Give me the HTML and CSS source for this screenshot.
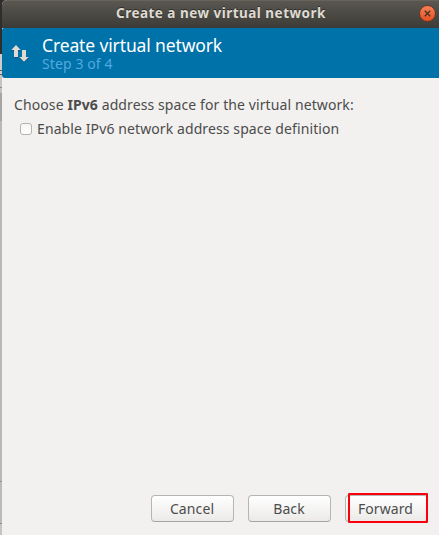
FILE: index.html
```html
<!DOCTYPE html>
<html lang="en">
<head>
<meta charset="utf-8">
<title>Create a new virtual network</title>
<link rel="stylesheet" href="styles.css">
</head>
<body>
<div class="desktop">
  <main class="window">
    <header class="titlebar">
      <h1 class="title">Create a new virtual network</h1>
      <button class="close" aria-label="Close"><svg width="17" height="17" viewBox="0 0 17 17"><path d="M5.8 5.8 11.2 11.2M11.2 5.8 5.8 11.2" stroke="#43331f" stroke-width="1.3"/></svg></button>
    </header>
    <section class="banner">
      <svg class="arrows" width="20" height="18" viewBox="0 0 20 18"><path fill="#174563" opacity=".55" d="M5 1 10 6H7V13H3V6H0ZM11 6H15V13H18L13 18 8 13H11Z"/><path fill="#dfdbd2" d="M5 0 9.7 5H7V12H3V5H0.3ZM11 5H15V12H17.7L13 16.7 8.3 12H11Z"/></svg>
      <div class="heading">
        <h2>Create virtual network</h2>
        <p>Step 3 of 4</p>
      </div>
    </section>
    <section class="content">
      <p class="prompt">Choose <b>IPv6</b> address space for the virtual network:</p>
      <label class="option"><span class="check"></span><span class="option-text">Enable IPv6 network address space definition</span></label>
    </section>
    <footer class="actions">
      <button class="btn">Cancel</button>
      <button class="btn">Back</button>
      <button class="btn marked">Forward</button>
    </footer>
  </main>
</div>
</body>
</html>
```
FILE: styles.css
```css
*, *::after { box-sizing: border-box; }
body { margin: 0; font-family: "Noto Sans", "Open Sans", sans-serif; color: #4c4c4c; }
h1, h2, p { margin: 0; font-weight: 400; white-space: nowrap; }
.desktop {
  width: 439px; height: 535px; padding-left: 2px; overflow: hidden;
  background: linear-gradient(#302e2b 0 54px, #cdccca 54px 70px, #62615f 70px 71px, #cdccca 71px 74px, #62615f 74px 75px, #c5c4c2 75px 87px, #8e8d8b 87px 88px, #c2c1bf 88px 93px, #a6a5a3 93px 121px, #b9b8b6 121px 481px, #92918f 481px 482px, #bbbab8 482px 523px, #8e8d8b 523px 524px, #c5c4c2 524px);
}
.window { display: flex; flex-direction: column; height: 535px; background: #f2f1ef; border-radius: 5px 0 0 0; overflow: hidden; }
.titlebar { display: flex; align-items: center; height: 28px; padding: 0 3px 3px 114px; justify-content: space-between; background: linear-gradient(#595750, #3c3b37); border-top: 1px solid #66635b; }
.title { font-size: 13.5px; line-height: 18px; font-weight: 700; letter-spacing: .48px; color: #dfdbd2; text-shadow: 0 -1px #2c2b28; }
.close { width: 17px; height: 17px; padding: 0; border: 1px solid #6b3521; border-radius: 50%; background: linear-gradient(#f58158, #e64f22); }
.close svg { display: block; margin: -1px; }
.banner { display: flex; height: 50px; padding: 8px 0 0 9px; background: #0072aa; border-radius: 2px 0 0 3px; }
.arrows { margin: 9px 11px 0 0; }
.heading h2 { font-size: 17.5px; line-height: 18px; letter-spacing: -.13px; color: #fff; }
.heading p { font-size: 14px; line-height: 17px; margin-top: 1px; letter-spacing: .1px; color: #53a9de; }
.content { flex: 1; padding: 17px 12px; font-size: 14px; line-height: 20px; }
.prompt { letter-spacing: .1px; }
.prompt b { font-weight: 700; }
.option { display: flex; align-items: center; height: 20px; margin-top: 4px; padding-left: 6px; white-space: nowrap; letter-spacing: .1px; }
.check { width: 12px; height: 12px; margin-right: 5px; border: 1px solid #b4b3b0; border-radius: 3px; background: linear-gradient(#f5f5f4, #fff); }
.actions { display: flex; gap: 14px; justify-content: flex-end; padding: 0 11px 13px 0; }
.btn { width: 83px; height: 27px; padding: 0 1px 1px 0; border: 1px solid #b6b5b2; border-bottom-color: #a5a4a1; border-radius: 4px; background: linear-gradient(#fff, #ebeae8); font: 14px "Noto Sans", sans-serif; color: #4c4c4c; position: relative; letter-spacing: .1px; }
.marked { padding-right: 2px; }
.marked::after { content: ""; position: absolute; left: 2px; top: -3px; width: 80px; height: 30px; border: 2px solid #f9000e; border-radius: 1px; }
```
